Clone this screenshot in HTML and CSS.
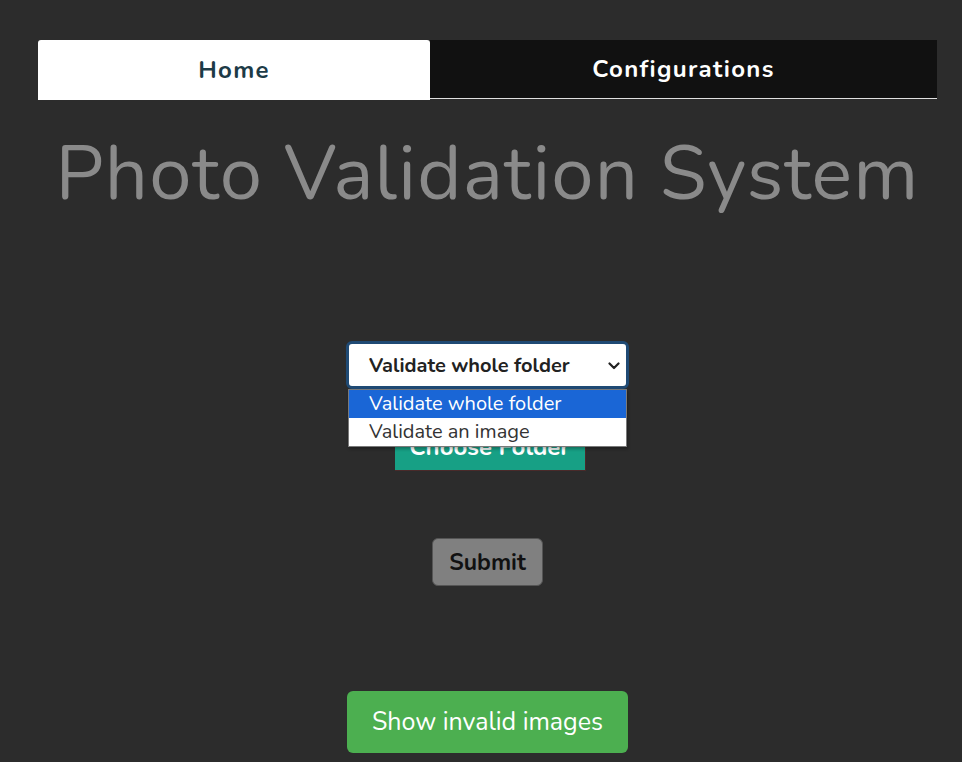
FILE: index.html
```html
<!DOCTYPE html>
<html>
<head>
<meta charset="utf-8">
<link rel="stylesheet" href="styles.css">
</head>
<body>
<div class="page">
  <nav class="tabs">
    <div class="tab tab-active">Home</div>
    <div class="tab tab-dark">Configurations</div>
  </nav>
  <h1 class="title">Photo Validation System</h1>
  <div class="form">
    <div class="select-wrap">
      <div class="select">
        <span class="select-text">Validate whole folder</span>
        <svg class="chev" width="12" height="8" viewBox="0 0 12 8"><path d="M1.5 1.5 L6 6 L10.5 1.5" fill="none" stroke="#222" stroke-width="2.2" stroke-linecap="round" stroke-linejoin="round"/></svg>
      </div>
      <ul class="options">
        <li class="opt opt-sel">Validate whole folder</li>
        <li class="opt">Validate an image</li>
      </ul>
    </div>
    <button class="btn-choose">Choose Folder</button>
    <button class="btn-submit">Submit</button>
    <button class="btn-show">Show invalid images</button>
  </div>
</div>
</body>
</html>
```

FILE: styles.css
```css
* { box-sizing: border-box; }
html, body {
  margin: 0;
  padding: 0;
  background: #2c2c2c;
  font-family: "Nunito", "Lato", "Open Sans", sans-serif;
}
.page {
  padding: 40px 25px 0 38px;
  height: 762px;
  overflow: hidden;
}
.tabs {
  display: grid;
  grid-template-columns: 392px 507px;
  height: 60px;
}
.tab {
  display: flex;
  align-items: center;
  justify-content: center;
  font-weight: 700;
  font-size: 24px;
  letter-spacing: 1.3px;
}
.tab-active {
  background: #fff;
  color: #1d3b47;
  border-radius: 3px 3px 0 0;
}
.tab-dark {
  background: #111;
  color: #fff;
  border-bottom: 1px solid #e0e0e0;
  height: 59px;
}
.title {
  margin: 24px 0 0 0;
  text-align: center;
  font-weight: 400;
  font-size: 76px;
  line-height: 100px;
  color: #8a8a8a;
  letter-spacing: 1.2px;
}
.form {
  display: flex;
  flex-direction: column;
  align-items: center;
  margin-top: 117px;
}
.select-wrap {
  position: relative;
  width: 283px;
  height: 48px;
  z-index: 2;
}
.select {
  height: 48px;
  border: 3px solid #1f4a74;
  border-radius: 6px;
  background: #fff;
  display: flex;
  align-items: center;
  padding: 0 0 0 20px;
  position: relative;
}
.select-text {
  font-size: 20px;
  font-weight: 700;
  color: #222;
}
.chev {
  position: absolute;
  right: 6px;
  top: 18px;
}
.options {
  position: absolute;
  left: 2px;
  top: 48px;
  width: 279px;
  margin: 0;
  padding: 0;
  list-style: none;
  background: #fff;
  border: 1px solid #7a7a7a;
  box-shadow: 1px 2px 3px rgba(0,0,0,0.3);
}
.opt {
  height: 28px;
  line-height: 27px;
  padding-left: 20px;
  font-size: 20px;
  color: #333;
}
.opt-sel {
  background: #1a66d6;
  color: #fff;
}
button {
  font-family: inherit;
  border: none;
  cursor: pointer;
}
.btn-choose {
  margin-top: 34px;
  width: 191px;
  height: 48px;
  background: #17a085;
  border-right: 1px solid #4a2a2a;
  border-bottom: 1px solid #4a2a2a;
  color: #fff;
  font-size: 24px;
  font-weight: 700;
  border-radius: 0;
  margin-left: 5px;
}
.btn-submit {
  margin-top: 67px;
  width: 111px;
  height: 48px;
  background: #808080;
  border: 1px solid #555;
  border-radius: 6px;
  color: #111;
  font-size: 23px;
  font-weight: 700;
}
.btn-show {
  margin-top: 105px;
  width: 281px;
  height: 62px;
  background: #4caf50;
  color: #fff;
  font-size: 25px;
  border-radius: 6px;
}
```
